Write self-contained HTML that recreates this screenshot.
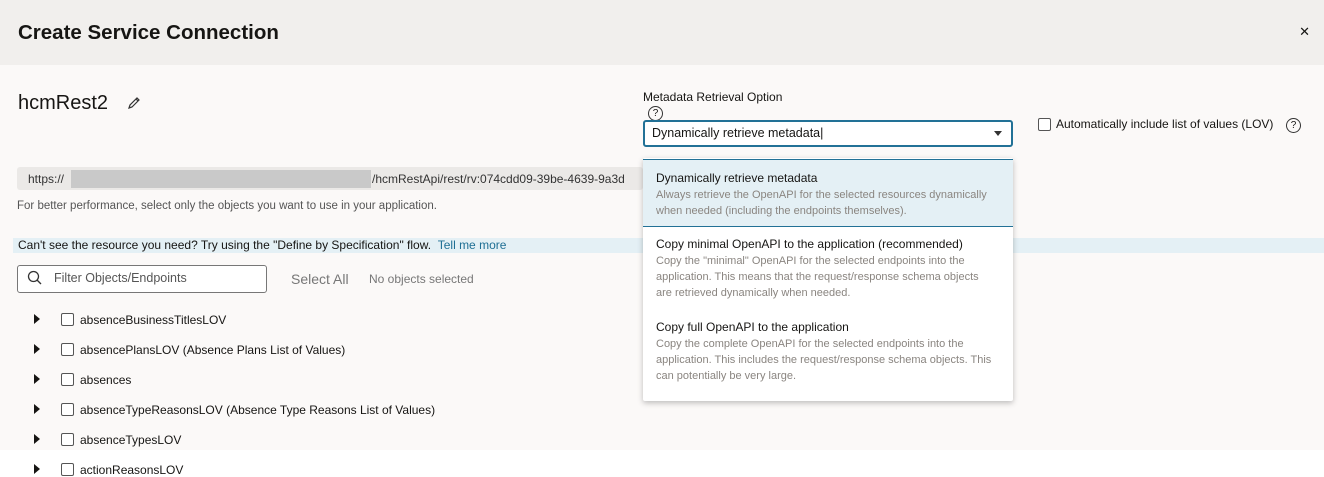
<!DOCTYPE html>
<html><head><style>
*{box-sizing:border-box;margin:0;padding:0}
body{width:1324px;height:477px;overflow:hidden;background:#fff;font-family:"Liberation Sans",sans-serif;color:#161513;position:relative}
.hdr{position:absolute;left:0;top:0;width:1324px;height:65px;background:#f1efed}
.hdr h1{position:absolute;left:18px;top:21px;font-size:20.5px;font-weight:bold}
.x{position:absolute;right:14px;top:24px;font-size:13px}
.main{position:absolute;left:0;top:65px;width:1324px;height:385px;background:#fbf9f8}
.a{position:absolute;white-space:nowrap}
.cb{position:absolute;width:13px;height:13px;border:1px solid #555;border-radius:2px;background:#fff}
.tri{position:absolute;width:0;height:0;border-top:5px solid transparent;border-bottom:5px solid transparent;border-left:6px solid #161513}
.q{position:absolute;width:15px;height:15px;border:1.3px solid #333;border-radius:50%;font-size:10px;text-align:center;line-height:13px}
.dd{position:absolute;left:643px;top:158px;width:370px;height:243px;background:#fff;box-shadow:0 2px 6px rgba(0,0,0,.25);border-radius:2px}
.opt{position:absolute;left:0;width:370px;padding-left:13px}
.opt .t{font-size:12px;color:#161513}
.opt .d{font-size:11px;color:#8a8580;line-height:16px;margin-top:2px}
</style></head><body>
<div class="hdr"><h1>Create Service Connection</h1><div class="x">✕</div></div>
<div class="main"></div>
<div class="a" style="left:18px;top:92px;font-size:20px">hcmRest2</div>
<svg class="a" style="left:127px;top:96px" width="14" height="14" viewBox="0 0 14 14"><path d="M2 12 L3 9 L10 2 L12 4 L5 11 Z M9 3 L11 5" fill="none" stroke="#333" stroke-width="1.2"/></svg>
<div class="a" style="left:17px;top:167px;width:626px;height:23px;background:#ebe9e7;border-radius:3px"></div>
<div class="a" style="left:28px;top:172px;font-size:12px;color:#333">https://</div>
<div class="a" style="left:71px;top:170px;width:300px;height:18px;background:#c9c9c9"></div>
<div class="a" style="left:372px;top:172px;font-size:12px;color:#333">/hcmRestApi/rest/rv:074cdd09-39be-4639-9a3d</div>
<div class="a" style="left:17px;top:200px;font-size:11.5px;color:#555">For better performance, select only the objects you want to use in your application.</div>
<div class="a" style="left:13px;top:238px;width:1311px;height:15px;background:#e4f0f5"></div>
<div class="a" style="left:18px;top:238px;font-size:12px;color:#161513">Can't see the resource you need? Try using the "Define by Specification" flow. <span style="color:#1f6f94">&nbsp;Tell me more</span></div>
<div class="a" style="left:17px;top:265px;width:250px;height:28px;border:1px solid #777;border-radius:3px;background:#fff"></div>
<svg class="a" style="left:27px;top:270px" width="16" height="16" viewBox="0 0 16 16"><circle cx="6.5" cy="6.5" r="5" fill="none" stroke="#333" stroke-width="1.3"/><path d="M10 10 L14 14" stroke="#333" stroke-width="1.3"/></svg>
<div class="a" style="left:54px;top:271px;font-size:12.5px;color:#555">Filter Objects/Endpoints</div>
<div class="a" style="left:291px;top:271px;font-size:14px;color:#777">Select All</div>
<div class="a" style="left:369px;top:272px;font-size:12px;color:#777">No objects selected</div>

<div class="tri" style="left:34px;top:314px"></div><div class="cb" style="left:61px;top:313px"></div><div class="a" style="left:80px;top:313px;font-size:12px">absenceBusinessTitlesLOV</div>
<div class="tri" style="left:34px;top:344px"></div><div class="cb" style="left:61px;top:343px"></div><div class="a" style="left:80px;top:343px;font-size:12px">absencePlansLOV (Absence Plans List of Values)</div>
<div class="tri" style="left:34px;top:374px"></div><div class="cb" style="left:61px;top:373px"></div><div class="a" style="left:80px;top:373px;font-size:12px">absences</div>
<div class="tri" style="left:34px;top:404px"></div><div class="cb" style="left:61px;top:403px"></div><div class="a" style="left:80px;top:403px;font-size:12px">absenceTypeReasonsLOV (Absence Type Reasons List of Values)</div>
<div class="tri" style="left:34px;top:434px"></div><div class="cb" style="left:61px;top:433px"></div><div class="a" style="left:80px;top:433px;font-size:12px">absenceTypesLOV</div>
<div class="tri" style="left:34px;top:464px"></div><div class="cb" style="left:61px;top:463px"></div><div class="a" style="left:80px;top:463px;font-size:12px">actionReasonsLOV</div>

<div class="a" style="left:643px;top:90px;font-size:12px">Metadata Retrieval Option</div>
<div class="q" style="left:648px;top:106px">?</div>
<div class="a" style="left:643px;top:120px;width:370px;height:27px;border:2px solid #227196;border-radius:3px;background:#fff"></div>
<div class="a" style="left:652px;top:126px;font-size:12.5px">Dynamically retrieve metadata|</div>
<div class="a" style="left:994px;top:131px;border-left:4px solid transparent;border-right:4px solid transparent;border-top:5px solid #333"></div>
<div class="cb" style="left:1038px;top:118px;border-color:#555"></div>
<div class="a" style="left:1056px;top:117px;font-size:12px">Automatically include list of values (LOV)</div>
<div class="q" style="left:1286px;top:118px">?</div>

<div class="dd">
<div class="opt" style="top:1px;height:68px;background:#e4f0f5;border-top:1px solid #227196;border-bottom:1px solid #227196;padding-top:11px"><div class="t">Dynamically retrieve metadata</div><div class="d">Always retrieve the OpenAPI for the selected resources dynamically<br>when needed (including the endpoints themselves).</div></div>
<div class="opt" style="top:79px"><div class="t">Copy minimal OpenAPI to the application (recommended)</div><div class="d">Copy the "minimal" OpenAPI for the selected endpoints into the<br>application. This means that the request/response schema objects<br>are retrieved dynamically when needed.</div></div>
<div class="opt" style="top:162px"><div class="t">Copy full OpenAPI to the application</div><div class="d">Copy the complete OpenAPI for the selected endpoints into the<br>application. This includes the request/response schema objects. This<br>can potentially be very large.</div></div>
</div>
</body></html>
